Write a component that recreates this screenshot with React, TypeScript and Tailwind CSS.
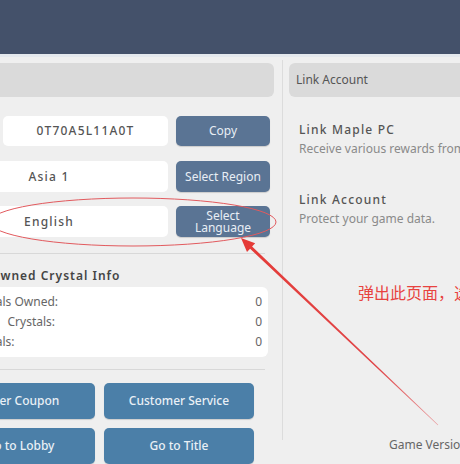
import { FC } from 'react';

const Field: FC<{ text: string; className?: string }> = ({ text, className = '' }) => (
  <div
    className={`flex flex-1 items-center justify-center rounded-[5px] bg-white text-[12px] font-medium tracking-[1.2px] text-[#555] ${className}`}
  >
    {text}
  </div>
);

const SlateButton: FC<{ children: React.ReactNode }> = ({ children }) => (
  <div className="flex w-[94px] shrink-0 items-center justify-center rounded-[5px] bg-[#5a7494] text-center text-[12px] leading-[12px] text-[#e8eef5] shadow-[0_1px_1px_rgba(0,0,0,0.15)]">
    {children}
  </div>
);

const BlueButton: FC<{ label: string }> = ({ label }) => (
  <div className="flex h-[36px] items-center justify-center rounded-[5px] bg-[#4b7fa8] text-[12px] font-medium text-[#e9f0f6] shadow-[0_1px_1px_rgba(0,0,0,0.15)]">
    {label}
  </div>
);

// the box is wider than the visible area; only the tail of each label shows
const crystals = [
  { prefix: '', label: 'Crystals Owned:', value: 0 },
  { prefix: 'Free', label: 'Crystals:', value: 0 },
  { prefix: '', label: 'Crystals:', value: 0 },
];

const LeftPanel: FC = () => (
  <div className="flex w-[274px] shrink-0 flex-col pt-[6px]">
    <div className="h-[34px] rounded-r-[6px] bg-[#dadada]" />

    <div className="mt-[19px] flex h-[30px] gap-[8px] pr-[4px]">
      <Field text="0T70A5L11A0T" className="ml-[3px]" />
      <SlateButton>Copy</SlateButton>
    </div>

    <div className="mt-[15px] flex h-[31px] gap-[8px] pr-[4px]">
      <Field text="Asia 1" className="-ml-[70px]" />
      <SlateButton>Select Region</SlateButton>
    </div>

    <div className="mt-[14px] flex h-[31px] gap-[8px] pr-[4px]">
      <Field text="English" className="-ml-[70px]" />
      <SlateButton>
        Select
        <br />
        Language
      </SlateButton>
    </div>

    <div className="mt-[16px] h-px w-[265px] bg-[#d8d8d8]" />

    <div className="-ml-[10px] mt-[13px] h-[18px] text-[12px] font-semibold leading-[18px] tracking-[1px] text-[#444]">
      Owned Crystal Info
    </div>

    <div className="-ml-[60px] mr-[6px] mt-[2px] flex h-[70px] flex-col rounded-[6px] bg-white py-[5px] pl-[27px] pr-[6px]">
      {crystals.map((c, i) => (
        <div key={i} className="flex h-[20px] items-center justify-between text-[12px] text-[#666]">
          <span className="flex gap-[16px]">
            {c.prefix && <span>{c.prefix}</span>}
            <span>{c.label}</span>
          </span>
          <span>{c.value}</span>
        </div>
      ))}
    </div>

    <div className="mt-[12px] h-px w-[265px] bg-[#d8d8d8]" />

    <div className="-ml-[55px] mt-[13px] grid w-[309px] grid-cols-2 gap-[9px]">
      <BlueButton label="Enter Coupon" />
      <BlueButton label="Customer Service" />
      <BlueButton label="Go to Lobby" />
      <BlueButton label="Go to Title" />
    </div>
  </div>
);

const RightPanel: FC = () => (
  <div className="flex min-w-0 flex-1 flex-col pl-[6px] pt-[6px]">
    <div className="flex h-[34px] items-center whitespace-nowrap rounded-l-[6px] bg-[#dadada] pl-[7px] text-[12px] text-[#555]">
      Link Account
    </div>

    <div className="whitespace-nowrap pl-[10px]">
      <div className="mt-[23px] text-[12px] font-medium leading-[19px] tracking-[1.2px] text-[#555]">Link Maple PC</div>
      <div className="text-[12px] leading-[19px] text-[#8a8a8a]">Receive various rewards from Maple PC.</div>

      <div className="mt-[32px] text-[12px] font-medium leading-[19px] tracking-[1.2px] text-[#555]">Link Account</div>
      <div className="text-[12px] leading-[19px] text-[#8a8a8a]">Protect your game data.</div>
    </div>

    <div className="mb-[10px] mt-auto whitespace-nowrap pl-[100px] text-[12px] leading-[19px] text-[#666]">
      Game Version 1.0.0
    </div>
  </div>
);

const Annotations: FC = () => (
  <>
    <svg className="pointer-events-none absolute left-0 top-0" width="460" height="464" viewBox="0 0 460 464">
      <defs>
        <linearGradient id="arrowFade" x1="241" y1="238" x2="438" y2="425" gradientUnits="userSpaceOnUse">
          <stop offset="0" stopColor="#e53a36" />
          <stop offset="0.7" stopColor="#e0474a" />
          <stop offset="1" stopColor="#e9a0a2" />
        </linearGradient>
      </defs>
      <ellipse cx="133" cy="222" rx="143" ry="24" fill="none" stroke="#e25a5e" strokeWidth="1" />
      <polygon
        points="241,238 247,251.9 250.1,248.7 437.8,425.2 438.2,424.8 252.1,246.5 255.2,243.3"
        fill="url(#arrowFade)"
      />
    </svg>
    <div className="pointer-events-none absolute left-[358px] top-[283px] whitespace-nowrap font-['Noto_Sans_CJK_SC',sans-serif] text-[16px] leading-[18px] text-[#e8433f]">
      弹出此页面，选择
    </div>
  </>
);

const App: FC = () => {
  return (
    <div className="relative h-[464px] w-[460px] overflow-hidden bg-[#efefef] font-['Noto_Sans','Noto_Sans_CJK_SC',sans-serif]">
      <div className="h-[54px] bg-[#44516a]" />
      <div className="h-[3px] bg-[#e4e8ed]" />
      <div className="flex h-[407px]">
        <LeftPanel />
        <div className="ml-[8px] mt-[3px] h-[380px] w-px shrink-0 bg-[#dcdcdc]" />
        <RightPanel />
      </div>
      <Annotations />
    </div>
  );
};

export default App;
